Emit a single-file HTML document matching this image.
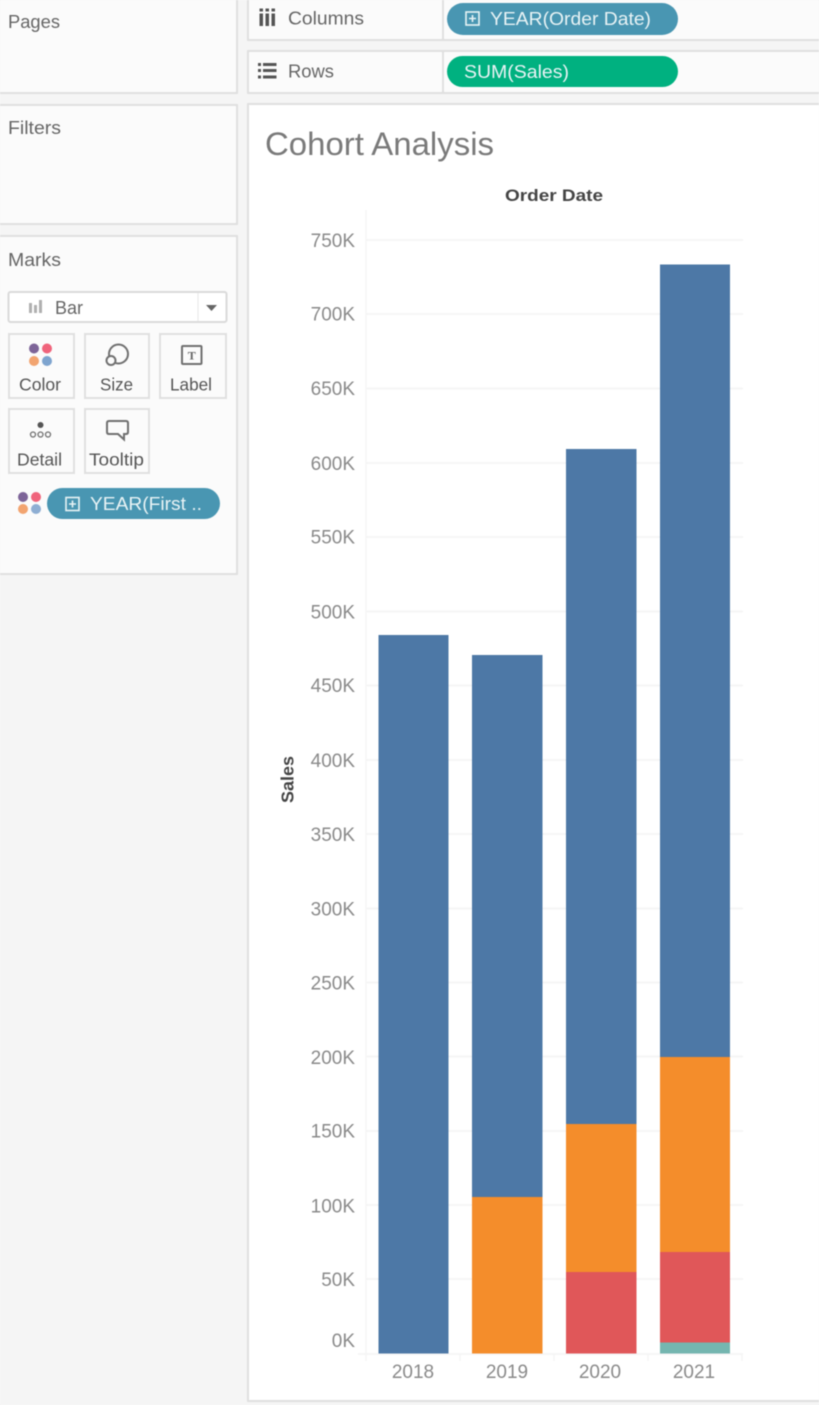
<!DOCTYPE html>
<html><head><meta charset="utf-8"><style>
html,body{margin:0;padding:0;width:819px;height:1405px;overflow:hidden;background:#f5f5f5}
svg{display:block;font-family:"Liberation Sans",sans-serif;filter:blur(.45px)}
.u{font-size:18.5px;fill:#666}
.b{font-size:17.5px;fill:#555}
.a{font-size:19px;fill:#8a8a8a}
.w{font-size:18.5px;fill:#e8f3f5}
</style></head><body>
<svg width="819" height="1405" viewBox="0 0 819 1405" xmlns="http://www.w3.org/2000/svg">
<rect width="819" height="1405" fill="#f5f5f5"/>
<g fill="#fbfbfb" stroke="#e0e0e0" stroke-width="2">
<rect x="-5" y="-5" width="242" height="98"/>
<rect x="-5" y="105" width="242" height="119"/>
<rect x="-5" y="236" width="242" height="338"/>
<rect x="248" y="-5" width="580" height="45"/>
<rect x="248" y="51" width="580" height="42"/>
</g>
<path d="M443 0V40M443 51V93" stroke="#e0e0e0" stroke-width="2"/>
<rect x="248" y="104" width="580" height="1297" fill="#fff" stroke="#e0e0e0" stroke-width="2"/>

<text x="8" y="28" class="u" textLength="52" lengthAdjust="spacingAndGlyphs">Pages</text>
<text x="8" y="134" class="u" textLength="53" lengthAdjust="spacingAndGlyphs">Filters</text>
<text x="8" y="266" class="u" textLength="53" lengthAdjust="spacingAndGlyphs">Marks</text>

<rect x="8.500" y="292" width="218" height="30" fill="#fff" stroke="#dadada" stroke-width="2" rx="2"/>
<path d="M198 293V321" stroke="#e8e8e8"/>
<path d="M206 305H217L211.500 311Z" fill="#666"/>
<g fill="#b0b0b0"><rect x="29" y="303" width="3" height="10"/><rect x="34" y="305" width="3" height="8"/><rect x="39" y="300" width="3" height="13"/></g>
<text x="55" y="314" class="u" textLength="28" lengthAdjust="spacingAndGlyphs">Bar</text>

<g fill="#fbfbfb" stroke="#e0e0e0" stroke-width="2">
<rect x="9" y="334" width="65" height="64"/>
<rect x="85" y="334" width="64" height="64"/>
<rect x="160" y="334" width="66" height="64"/>
<rect x="9" y="409" width="65" height="64"/>
<rect x="85" y="409" width="64" height="64"/>
</g>
<circle cx="34" cy="348.500" r="5" fill="#7d6498"/><circle cx="47" cy="348.500" r="5" fill="#f0647c"/>
<circle cx="34" cy="361" r="5" fill="#f2a470"/><circle cx="47" cy="361" r="5" fill="#7ea4cf"/>
<text x="19" y="390.500" class="b" textLength="42" lengthAdjust="spacingAndGlyphs">Color</text>
<circle cx="118.500" cy="354" r="9.500" fill="none" stroke="#707070" stroke-width="2"/>
<circle cx="111" cy="360.500" r="4.500" fill="#fbfbfb" stroke="#707070" stroke-width="2"/>
<text x="100" y="390.500" class="b" textLength="33" lengthAdjust="spacingAndGlyphs">Size</text>
<rect x="182" y="346" width="19.500" height="18" fill="none" stroke="#707070" stroke-width="2" rx="1"/>
<text x="191.800" y="359.500" text-anchor="middle" font-size="12" font-weight="bold" fill="#666" style="font-family:'Liberation Serif',serif">T</text>
<text x="170" y="390.500" class="b" textLength="42" lengthAdjust="spacingAndGlyphs">Label</text>
<circle cx="40.500" cy="425" r="3" fill="#555"/>
<g fill="none" stroke="#707070" stroke-width="1.300"><circle cx="33" cy="434.500" r="2.500"/><circle cx="40.500" cy="434.500" r="2.500"/><circle cx="48" cy="434.500" r="2.500"/></g>
<text x="17" y="465.500" class="b" textLength="45" lengthAdjust="spacingAndGlyphs">Detail</text>
<path d="M109 421H126Q128 421 128 423V432Q128 434 126 434H124V439.500L118 434H109Q107 434 107 432V423Q107 421 109 421Z" fill="none" stroke="#707070" stroke-width="2"/>
<text x="89" y="465.500" class="b" textLength="55" lengthAdjust="spacingAndGlyphs">Tooltip</text>

<circle cx="23" cy="497" r="5" fill="#7d6498"/><circle cx="36" cy="497" r="5" fill="#f0647c"/>
<circle cx="23" cy="509" r="5" fill="#f2a470"/><circle cx="36" cy="509" r="5" fill="#8eaed3"/>
<rect x="47" y="488" width="173" height="31" rx="15.500" fill="#4996b2"/>
<rect x="66" y="497.500" width="13" height="13" fill="none" stroke="#e8f3f5" stroke-width="1.600"/>
<path d="M69 504H76M72.500 500.500V507.500" stroke="#e8f3f5" stroke-width="1.600"/>
<text x="90" y="510" class="w" textLength="112" lengthAdjust="spacingAndGlyphs">YEAR(First ..</text>

<g fill="#555"><rect x="259.500" y="13.500" width="3.500" height="12.500"/><rect x="265.500" y="13.500" width="3.500" height="12.500"/><rect x="271.500" y="13.500" width="3.500" height="12.500"/>
<rect x="259.500" y="8.500" width="3.500" height="3"/><rect x="265.500" y="8.500" width="3.500" height="3"/><rect x="271.500" y="8.500" width="3.500" height="3"/></g>
<text x="288" y="24.500" class="u" textLength="76" lengthAdjust="spacingAndGlyphs">Columns</text>
<g fill="#555"><rect x="258" y="63" width="3" height="3"/><rect x="258" y="69" width="3" height="3"/><rect x="258" y="75.500" width="3" height="3"/>
<rect x="263" y="63" width="13.500" height="3"/><rect x="263" y="69" width="13.500" height="3"/><rect x="263" y="75.500" width="13.500" height="3"/></g>
<text x="288" y="77.500" class="u" textLength="46" lengthAdjust="spacingAndGlyphs">Rows</text>

<rect x="447" y="3" width="231" height="32" rx="16" fill="#4996b2"/>
<rect x="466" y="12" width="13" height="13" fill="none" stroke="#e8f3f5" stroke-width="1.600"/>
<path d="M469 18.500H476M472.500 15V22" stroke="#e8f3f5" stroke-width="1.600"/>
<text x="490" y="25" class="w" textLength="161" lengthAdjust="spacingAndGlyphs">YEAR(Order Date)</text>
<rect x="447" y="56" width="231" height="31" rx="15.500" fill="#00b180"/>
<text x="464" y="78" class="w" textLength="105" lengthAdjust="spacingAndGlyphs">SUM(Sales)</text>

<text x="265" y="155" font-size="32" fill="#7a7a7a" textLength="229" lengthAdjust="spacingAndGlyphs">Cohort Analysis</text>
<text x="505" y="201" font-size="17" font-weight="bold" fill="#444" textLength="98" lengthAdjust="spacingAndGlyphs">Order Date</text>
<text transform="translate(293.500 803) rotate(-90)" font-size="17.500" font-weight="bold" fill="#444" textLength="47" lengthAdjust="spacingAndGlyphs">Sales</text>

<g stroke="#f3f3f3" stroke-width="1.500">
<path d="M366 240H743M366 314H743M366 388.500H743M366 463H743M366 537H743M366 611.500H743M366 685.500H743M366 760H743M366 834H743M366 908.500H743M366 982.500H743M366 1056.500H743M366 1131H743M366 1205H743M366 1279H743M358 1354H743"/>
</g>
<path d="M366 210V1361M460 1354V1361M554 1354V1361M648 1354V1361M742 1354V1361" stroke="#f6f6f6" stroke-width="1.500"/>

<g fill="#4d78a6">
<rect x="378.500" y="635" width="70" height="718.500"/>
<rect x="472" y="655" width="70.500" height="698.500"/>
<rect x="566" y="449" width="70.500" height="904.500"/>
<rect x="660" y="264.500" width="70" height="1089"/>
</g>
<g fill="#f48d2b">
<rect x="472" y="1197" width="70.500" height="156.500"/>
<rect x="566" y="1124" width="70.500" height="229.500"/>
<rect x="660" y="1057" width="70" height="296.500"/>
</g>
<g fill="#e05759">
<rect x="566" y="1272" width="70.500" height="81.500"/>
<rect x="660" y="1252" width="70" height="101.500"/>
</g>
<rect x="660" y="1342.500" width="70" height="11" fill="#75b6b0"/>

<g class="a" text-anchor="end">
<text x="355" y="247">750K</text><text x="355" y="320.500">700K</text><text x="355" y="395">650K</text><text x="355" y="470">600K</text><text x="355" y="543.500">550K</text><text x="355" y="618.500">500K</text><text x="355" y="692">450K</text><text x="355" y="767">400K</text><text x="355" y="841">350K</text><text x="355" y="915.500">300K</text><text x="355" y="989.500">250K</text><text x="355" y="1064">200K</text><text x="355" y="1137.500">150K</text><text x="355" y="1212.500">100K</text><text x="355" y="1286">50K</text><text x="355" y="1347">0K</text>
</g>
<g class="a" text-anchor="middle">
<text x="413" y="1378">2018</text><text x="507" y="1378">2019</text><text x="600" y="1378">2020</text><text x="694" y="1378">2021</text>
</g>
</svg>
</body></html>
